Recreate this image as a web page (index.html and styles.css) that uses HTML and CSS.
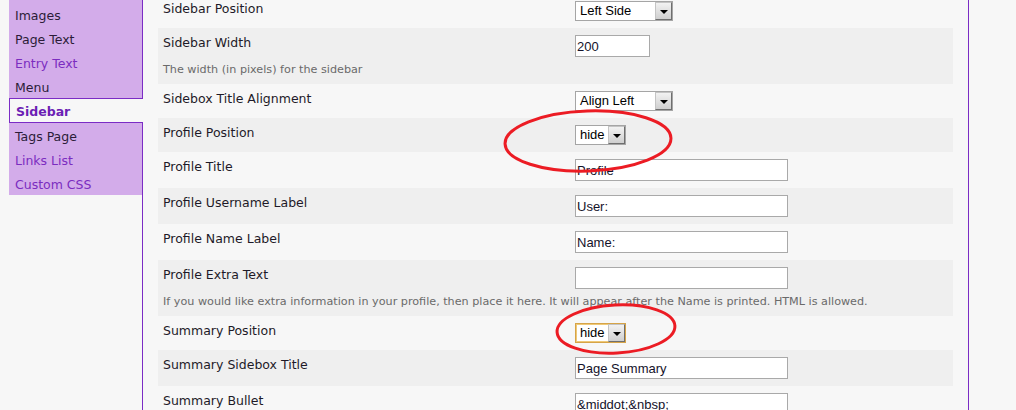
FILE: index.html
```html
<!DOCTYPE html>
<html lang="en">
<head>
  <meta charset="UTF-8" />
  <title>Blog Settings - Sidebar</title>
  <link rel="stylesheet" href="styles.css">
</head>
<body>

  <div class="page">
    <ul class="tabs">
      <li>Images</li>
      <li>Page Text</li>
      <li class="visited">Entry Text</li>
      <li>Menu</li>
      <li class="active">Sidebar</li>
      <li>Tags Page</li>
      <li class="visited">Links List</li>
      <li class="visited">Custom CSS</li>
    </ul>

    <div class="panel">
      <div class="settings">
        <div class="row">
          <label>Sidebar Position</label>
          <div class="field">
            <span class="select wide"><span class="value">Left Side</span><span class="arrow"></span></span>
          </div>
        </div>
        <div class="row">
          <label>Sidebar Width</label>
          <div class="field"><input type="text" class="short" value="200" /></div>
          <p class="help">The width (in pixels) for the sidebar</p>
        </div>
        <div class="row">
          <label>Sidebox Title Alignment</label>
          <div class="field">
            <span class="select wide"><span class="value">Align Left</span><span class="arrow"></span></span>
          </div>
        </div>
        <div class="row">
          <label>Profile Position</label>
          <div class="field">
            <span class="select"><span class="value">hide</span><span class="arrow"></span></span>
          </div>
        </div>
        <div class="row">
          <label>Profile Title</label>
          <div class="field"><input type="text" value="Profile" /></div>
        </div>
        <div class="row">
          <label>Profile Username Label</label>
          <div class="field"><input type="text" value="User:" /></div>
        </div>
        <div class="row">
          <label>Profile Name Label</label>
          <div class="field"><input type="text" value="Name:" /></div>
        </div>
        <div class="row">
          <label>Profile Extra Text</label>
          <div class="field"><input type="text" value="" /></div>
          <p class="help">If you would like extra information in your profile, then place it here. It will appear after the Name is printed. HTML is allowed.</p>
        </div>
        <div class="row">
          <label>Summary Position</label>
          <div class="field">
            <span class="select focus"><span class="value">hide</span><span class="arrow"></span></span>
          </div>
        </div>
        <div class="row">
          <label>Summary Sidebox Title</label>
          <div class="field"><input type="text" value="Page Summary" /></div>
        </div>
        <div class="row">
          <label>Summary Bullet</label>
          <div class="field"><input type="text" value="&amp;middot;&amp;nbsp;" /></div>
        </div>
      </div>
    </div>

    <!-- hand-drawn red marks over the screenshot -->
    <svg class="marks" width="1016" height="410" viewBox="0 0 1016 410">
      <ellipse cx="588" cy="141" rx="83" ry="30" transform="rotate(-2 588 141)" />
      <ellipse cx="616" cy="329" rx="59" ry="24" transform="rotate(-3 616 329)" />
    </svg>
  </div>

</body>
</html>
```

FILE: styles.css
```css
body {
  margin: 0;
  background-color: #f7f7f7;
  font-family: "DejaVu Sans", Verdana, sans-serif;
  overflow: hidden;
}

.page {
  display: flex;
  align-items: flex-start;
  padding-left: 9px;
}

/* left tabs */

.tabs {
  list-style: none;
  margin: 0 -1px 0 0;
  padding: 2px 0 0 0;
  width: 134px;
  box-sizing: border-box;
  flex-shrink: 0;
  background-color: #d3acea;
  border-right: 1px solid #7b2cc5;
  position: relative;
  z-index: 1;
}

.tabs li {
  height: 24px;
  box-sizing: border-box;
  padding: 4px 0 0 6px;
  line-height: 20px;
  font-size: 12.5px;
  color: #2b1c38;
  white-space: nowrap;
}

.tabs li.visited {
  color: #7b2cc0;
}

.tabs li.active {
  height: 25px;
  padding-top: 2px;
  line-height: 21px;
  margin-right: -1px;
  background-color: #f7f7f7;
  border: 1px solid #7b2cc5;
  border-right: none;
  font-weight: bold;
  color: #6c1fb4;
}

/* settings panel */

.panel {
  width: 827px;
  box-sizing: border-box;
  flex-shrink: 0;
  min-height: 430px;
  padding: 0 15px;
  border-left: 1px solid #7b2cc5;
  border-right: 1px solid #7b2cc5;
}

.settings {
  margin-top: -6px;
}

.row {
  display: grid;
  grid-template-columns: 412px 1fr;
  padding: 7px 0 7px 5px;
  background-color: #f7f7f7;
}

.row:nth-child(even) {
  background-color: #efefef;
}

.row label {
  font-size: 12.5px;
  line-height: 16px;
  color: #1e1a28;
}

.field {
  display: flex;
  align-items: flex-start;
}

.help {
  grid-column: 1 / -1;
  margin: 6px 0 0 0;
  font-size: 11.2px;
  line-height: 14px;
  color: #6a6a6a;
  white-space: nowrap;
}

input[type="text"] {
  width: 213px;
  height: 22px;
  box-sizing: border-box;
  margin: 0;
  padding: 0 1px;
  border: 1px solid #a9a9a9;
  background-color: #fff;
  font-family: "Liberation Sans", Arial, sans-serif;
  font-size: 13px;
  color: #14122a;
  outline: none;
}

input.short {
  width: 75px;
}

/* old-style dropdowns */

.select {
  display: inline-flex;
  align-items: stretch;
  width: 51px;
  height: 20px;
  box-sizing: border-box;
  border: 1px solid #a5a5a5;
  background-color: #fff;
  font-family: "Liberation Sans", Arial, sans-serif;
  font-size: 13px;
  color: #000;
}

.select.wide {
  width: 98px;
}

.select.focus {
  border-color: #d6a448;
  box-shadow: inset 0 0 0 1px #efc978;
}

.select .value {
  flex: 1;
  padding-left: 4px;
  line-height: 18px;
  white-space: nowrap;
}

.select .arrow {
  width: 17px;
  box-sizing: border-box;
  border: 1px solid;
  border-color: #c4c4c4 #6f6f6f #6f6f6f #c4c4c4;
  background: linear-gradient(#f2f2f2, #cfcfcf);
  display: flex;
  align-items: center;
  justify-content: center;
}

.select .arrow::after {
  content: "";
  border-left: 4px solid transparent;
  border-right: 4px solid transparent;
  border-top: 4px solid #000;
  margin-top: 1px;
}

.marks {
  position: absolute;
  top: 0;
  left: 0;
  pointer-events: none;
  z-index: 2;
}

.marks ellipse {
  fill: none;
  stroke: #ec1c24;
  stroke-width: 3;
}
```
